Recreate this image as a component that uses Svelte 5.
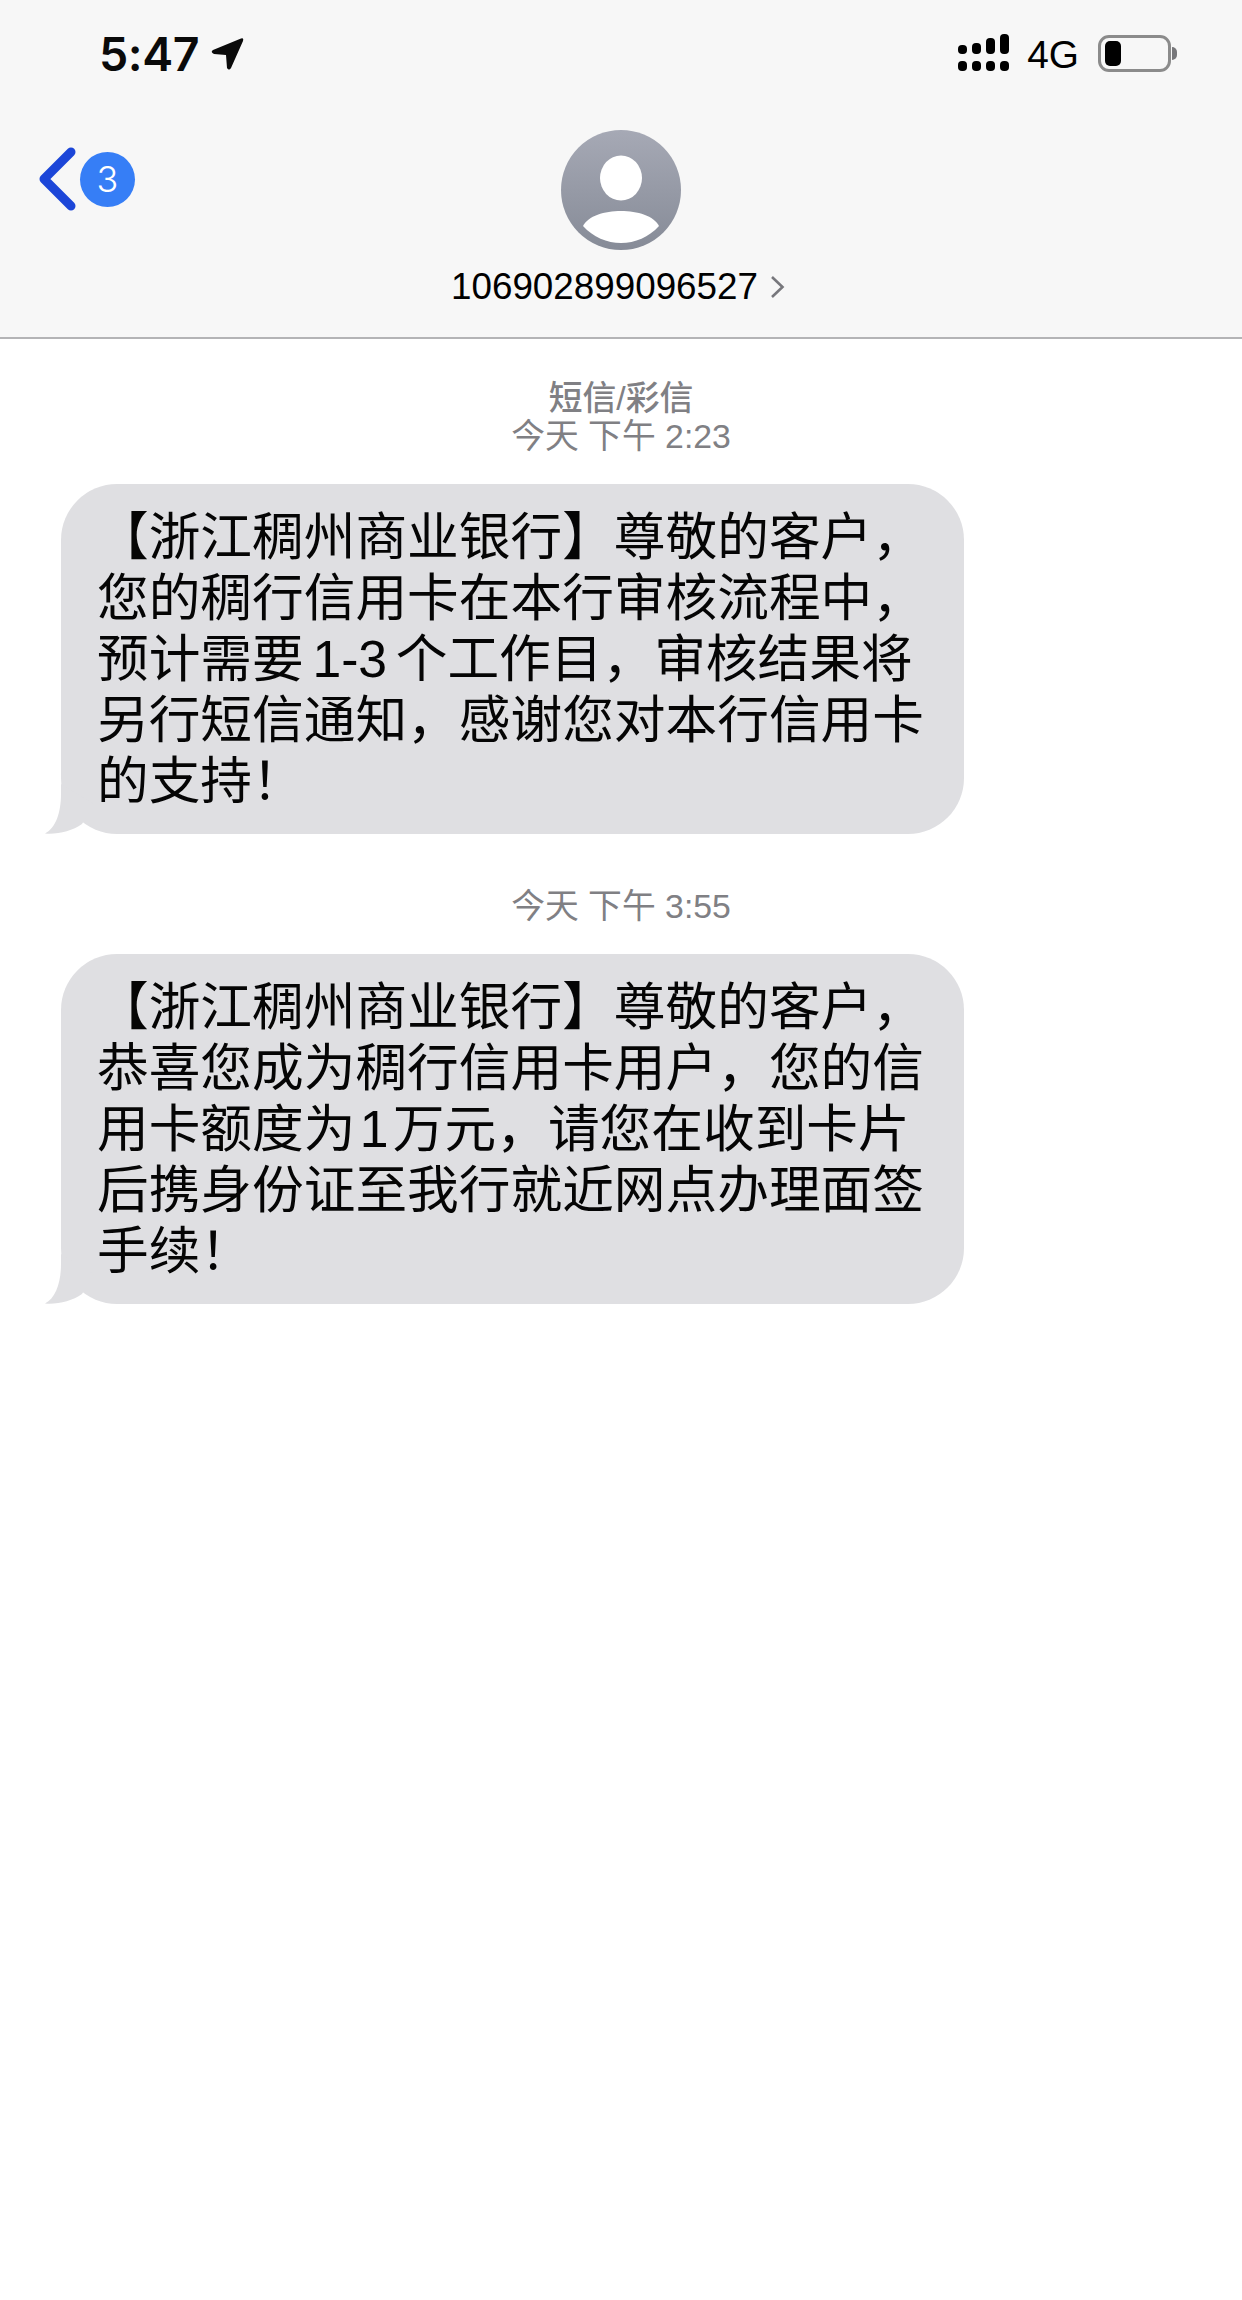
<script>
  const C = "\uFF0C"; // full-width comma
  const B = "\uFF01"; // full-width bang
  const messages = [
    {
      time: "今天 下午 2:23",
      label: "短信/彩信",
      lines: [
        `【浙江稠州商业银行】尊敬的客户${C}`,
        `您的稠行信用卡在本行审核流程中${C}`,
        `预计需要\u200A\u200A1-3\u200A\u200A个工作目${C}审核结果将`,
        `另行短信通知${C}感谢您对本行信用卡`,
        `的支持${B}`,
      ],
    },
    {
      time: "今天 下午 3:55",
      lines: [
        `【浙江稠州商业银行】尊敬的客户${C}`,
        `恭喜您成为稠行信用卡用户${C}您的信`,
        `用卡额度为\u200A1\u200A万元${C}请您在收到卡片`,
        `后携身份证至我行就近网点办理面签`,
        `手续${B}`,
      ],
    },
  ];
</script>

<div class="screen">
  <header class="nav">
    <div class="status">
      <div class="clock">
        <span>5:47</span>
        <svg width="36" height="34" viewBox="0 0 36 34">
          <path d="M3 13 L31 1.5 Q34 0.5 33 4 L21 31 Q19 34 17 31 L16 18 L4 17 Q0 15 3 13Z" fill="#0a0a0a" />
        </svg>
      </div>
      <div class="indicators">
        <svg class="signal" width="51" height="38" viewBox="0 0 51 38" fill="#000">
          <rect x="0" y="11" width="9" height="9" rx="4" />
          <rect x="14" y="9" width="9" height="11" rx="4" />
          <rect x="28" y="4" width="9" height="16" rx="4" />
          <rect x="42" y="0" width="9" height="20" rx="4" />
          <rect x="0" y="27" width="9" height="10" rx="4" />
          <rect x="14" y="27" width="9" height="10" rx="4" />
          <rect x="28" y="27" width="9" height="10" rx="4" />
          <rect x="42" y="27" width="9" height="10" rx="4" />
        </svg>
        <span class="net">4G</span>
        <div class="battery">
          <div class="level"></div>
        </div>
        <div class="nub"></div>
      </div>
    </div>

    <div class="contact-row">
      <div class="back">
        <svg width="40" height="66" viewBox="0 0 40 66">
          <path d="M33 6 L6 33 L33 60" fill="none" stroke="#1c46d8" stroke-width="9" stroke-linecap="round" stroke-linejoin="round" />
        </svg>
        <div class="count">3</div>
      </div>
      <div class="avatar">
        <svg width="120" height="120" viewBox="0 0 120 120">
          <defs>
            <linearGradient id="av" x1="0" y1="0" x2="0" y2="1">
              <stop offset="0" stop-color="#a6a9b5" />
              <stop offset="1" stop-color="#868b97" />
            </linearGradient>
          </defs>
          <circle cx="60" cy="60" r="60" fill="url(#av)" />
          <ellipse cx="60" cy="48" rx="21" ry="22.5" fill="#fff" />
          <path d="M22 96 C32 76 88 76 98 96 C88 107 74 113 60 113 C46 113 32 107 22 96Z" fill="#fff" />
        </svg>
      </div>
    </div>

    <div class="number">
      <span>106902899096527</span>
      <svg width="15" height="24" viewBox="0 0 15 24">
        <path d="M2 2 L12.5 12 L2 22" fill="none" stroke="#77777c" stroke-width="2.6" />
      </svg>
    </div>
  </header>

  <main class="thread">
    {#each messages as msg}
      <div class="stamp">
        {#if msg.label}<div class="label">{msg.label}</div>{/if}
        <div>{msg.time}</div>
      </div>
      <div class="bubble">
        {#each msg.lines as line}
          <div>{line}</div>
        {/each}
        <svg class="tail" width="60" height="50" viewBox="0 0 60 50">
          <path d="M17 10 C17 28 12 44 1 49.5 C14 50.5 28 47 38 40 L50 20 L17 0Z" fill="#dfdfe2" />
        </svg>
      </div>
    {/each}
  </main>
</div>

<style>
  :global(body) {
    background: #fff;
  }
  .screen {
    width: 1242px;
    height: 2300px;
    background: #fff;
    font-family: "Liberation Sans", "Noto Sans CJK SC", sans-serif;
    overflow: hidden;
  }
  .nav {
    height: 339px;
    box-sizing: border-box;
    background: #f7f7f7;
    border-bottom: 2px solid #b4b4b6;
  }
  .status {
    height: 130px;
    display: flex;
    justify-content: space-between;
    padding: 28px 65px 0 99px;
    box-sizing: border-box;
  }
  .clock {
    display: flex;
    align-items: flex-start;
    gap: 11px;
    font-family: Inter, sans-serif;
    font-size: 46.5px;
    line-height: 52px;
    font-weight: 600;
    letter-spacing: -0.4px;
    color: #0a0a0a;
  }
  .clock svg {
    margin-top: 9px;
  }
  .indicators {
    display: flex;
    align-items: flex-start;
    height: 44px;
    margin-top: 5px;
  }
  .signal {
    margin-top: 1px;
  }
  .net {
    font-size: 38.8px;
    line-height: 44px;
    margin-left: 18px;
    color: #000;
  }
  .battery {
    width: 73px;
    height: 37px;
    margin: 2px 0 0 19px;
    border: 3.5px solid #8b8b8b;
    border-radius: 11px;
    box-sizing: border-box;
    padding: 2.5px 3.5px;
  }
  .level {
    width: 16px;
    height: 25px;
    background: #000;
    border-radius: 5px;
  }
  .nub {
    width: 5px;
    height: 13px;
    margin: 14px 0 0 1px;
    background: #77777a;
    border-radius: 0 7px 7px 0;
  }
  .contact-row {
    position: relative;
    display: flex;
    justify-content: center;
    height: 120px;
  }
  .back {
    position: absolute;
    left: 38px;
    top: 16px;
    display: flex;
    align-items: center;
    gap: 2px;
  }
  .count {
    width: 55px;
    height: 55px;
    border-radius: 50%;
    background: #367ef6;
    color: #fff;
    font-family: Inter, sans-serif;
    font-weight: 300;
    font-size: 36px;
    line-height: 55px;
    text-align: center;
  }
  .avatar {
    width: 120px;
    height: 120px;
  }
  .number {
    display: flex;
    justify-content: center;
    align-items: center;
    gap: 12px;
    margin-top: 17px;
    padding-right: 6px;
    font-size: 36.8px;
    line-height: 40px;
    color: #000;
  }
  .thread {
    padding-top: 40px;
  }
  .stamp {
    text-align: center;
    font-size: 33.8px;
    line-height: 38px;
    color: #808084;
  }
  .label {
    font-weight: 500;
  }
  .bubble {
    position: relative;
    width: 903px;
    height: 350px;
    box-sizing: border-box;
    margin: 29px 0 53px 61px;
    padding: 23px 0 0 36px;
    background: #dfdfe2;
    border-radius: 56px;
    font-size: 51.7px;
    line-height: 61px;
    color: #050505;
    white-space: nowrap;
  }
  .tail {
    position: absolute;
    left: -17px;
    bottom: 0;
  }
</style>
